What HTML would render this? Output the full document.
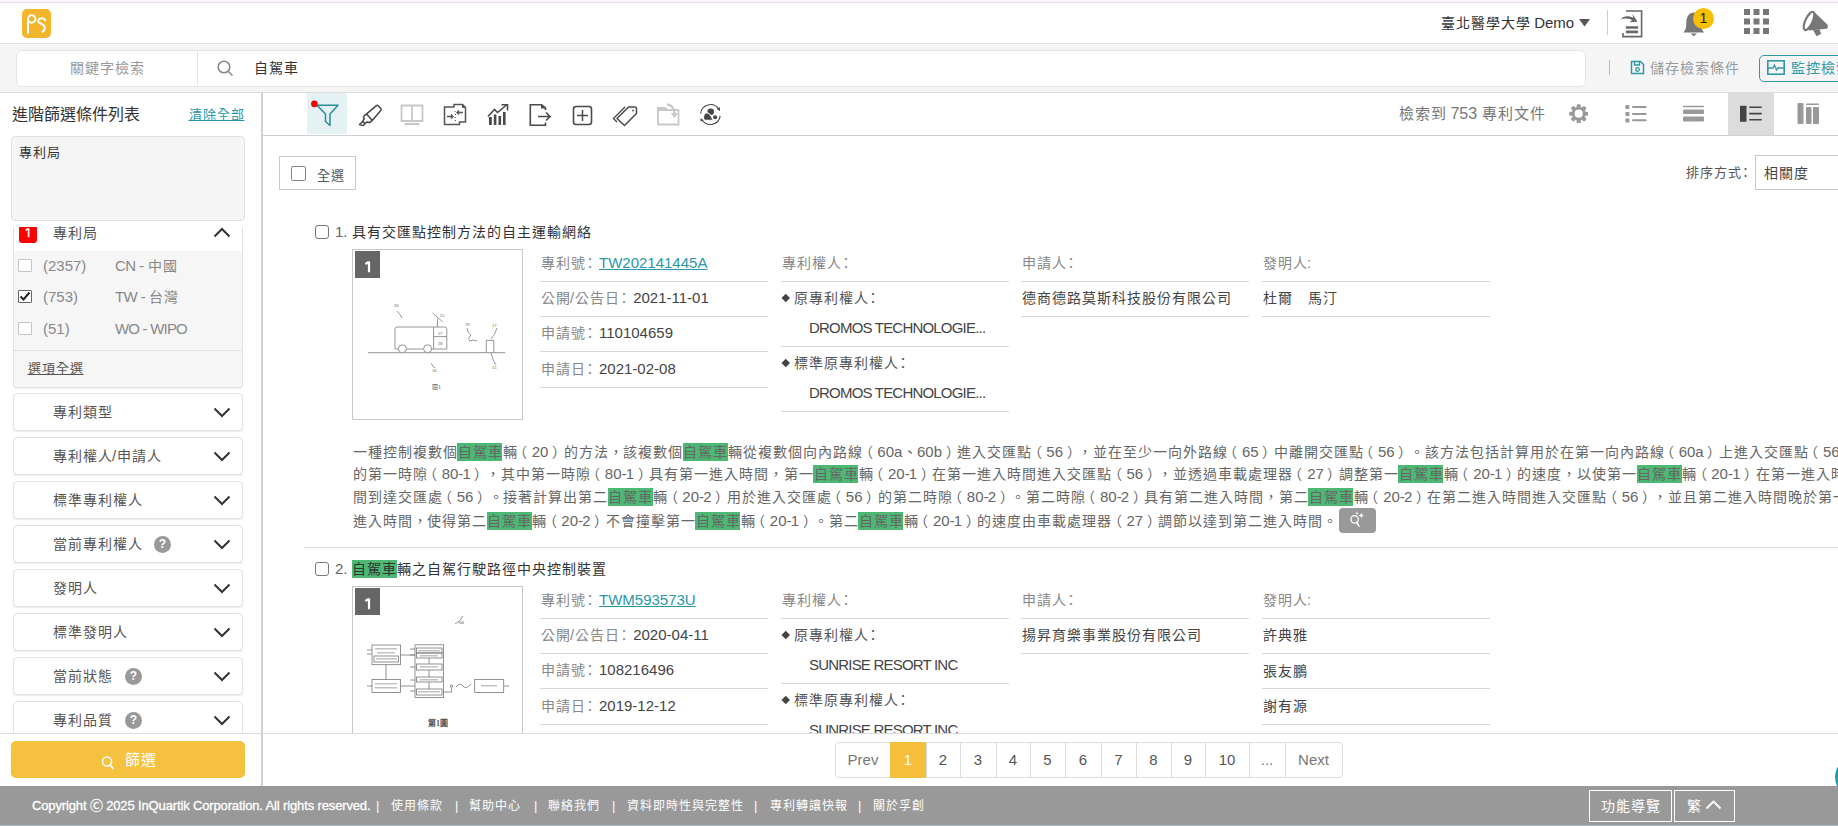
<!DOCTYPE html>
<html lang="zh-TW">
<head>
<meta charset="utf-8">
<style>
*{box-sizing:border-box;margin:0;padding:0}
html,body{width:1838px;height:826px;overflow:hidden;background:#fff}
body{font-family:"Liberation Sans",sans-serif;color:#333;position:relative;text-spacing-trim:space-all}
.a{position:absolute}
.nw{white-space:nowrap}
.k{font-size:calc(1em - 1px);letter-spacing:1px;position:relative;left:.5px}
.p .k{letter-spacing:.65px}
.po .k{left:-4px}
.pc .k{left:3.5px}
.k.cl{letter-spacing:0;left:-2.5px}
.nok .k{font-size:1em;letter-spacing:0;left:0}
svg{display:block}
</style>
</head>
<body>
<!-- top accent line -->
<div class="a" style="left:0;top:0;width:1838px;height:2px;background:#fcf4fd"></div>

<!-- HEADER -->
<div class="a" style="left:0;top:2px;width:1838px;height:42px;background:#fff;border-top:1px solid #e6dfeb;border-bottom:1px solid #e2e2e2"></div>
<!-- logo -->
<div class="a" style="left:22px;top:9px;width:29px;height:29px;background:#f2b52b;border-radius:5px">
  <svg width="29" height="29" viewBox="0 0 29 29"><g fill="none" stroke="#fff" stroke-width="2" stroke-linecap="round"><path d="M6 24V10.5"/><circle cx="9.7" cy="10" r="3.7"/><path d="M23.2 11.6C22.5 9 18 8.2 16.5 10.8C15 13.3 18.8 14.5 21.5 16.2C23.8 17.8 23 21 20.5 23"/></g></svg>
</div>
<div class="a nw" style="left:1440px;top:12.5px;font-size:15px;color:#333;line-height:20px"><span class="k">臺北醫學大學</span> Demo</div>
<svg class="a" style="left:1579px;top:19px" width="11" height="8" viewBox="0 0 11 8"><path d="M0 0H11L5.5 7.5Z" fill="#555"/></svg>
<div class="a" style="left:1607px;top:10px;width:1px;height:25px;background:#ccc"></div>
<!-- doc export icon -->
<svg class="a" style="left:1620px;top:9px" width="24" height="30" viewBox="0 0 24 30"><path d="M6 2H21.6V27.6H3V24" fill="none" stroke="#666" stroke-width="1.6"/><path d="M6 18.5H18M6 22.9H18" stroke="#666" stroke-width="2.6"/><path d="M0.5 10.6C3.5 7 8 6.2 13.2 8.8L12.5 5L17.5 12.8L9.5 13.3L12.2 10.9C8 9.3 4 9.2 0.5 10.6Z" fill="#666"/></svg>
<!-- bell -->
<svg class="a" style="left:1680px;top:8px" width="28" height="30" viewBox="0 0 28 30"><path d="M3.2 24.4C5.5 22.5 6.3 20 6.3 15C6.3 8.5 9.5 4.5 13.8 4.5C18 4.5 21.3 8.5 21.3 15C21.3 20 22 22.5 24.3 24.4Z" fill="#777"/><path d="M10.5 25.5H17L13.8 28.2Z" fill="#777"/></svg>
<div class="a" style="left:1693px;top:7.5px;width:21px;height:21px;border-radius:50%;background:#f7bf00;color:#222;font-size:14px;text-align:center;line-height:21px">1</div>
<!-- apps grid -->
<svg class="a" style="left:1744px;top:9px" width="25" height="25" viewBox="0 0 25 25"><g fill="#777"><rect x="0" y="0" width="6" height="6"/><rect x="9.5" y="0" width="6" height="6"/><rect x="19" y="0" width="6" height="6"/><rect x="0" y="9.5" width="6" height="6"/><rect x="9.5" y="9.5" width="6" height="6"/><rect x="19" y="9.5" width="6" height="6"/><rect x="0" y="19" width="6" height="6"/><rect x="9.5" y="19" width="6" height="6"/><rect x="19" y="19" width="6" height="6"/></g></svg>
<!-- megaphone -->
<svg class="a" style="left:1800px;top:8px" width="30" height="30" viewBox="0 0 30 30"><path d="M13.5 3.3L27 16.2Q29 18.5 26.8 20.7L8.5 22.6Z" fill="#777"/><path d="M13 22L16.6 28.3L21.2 25.8L19.5 21.3Z" fill="#777"/><ellipse cx="9" cy="13" rx="3.6" ry="9.8" transform="rotate(25 9 13)" fill="#fff" stroke="#777" stroke-width="2.2"/></svg>

<!-- SEARCH BAND -->
<div class="a" style="left:0;top:44px;width:1838px;height:49px;background:#f5f5f5;border-bottom:1px solid #dcdcdc"></div>
<div class="a" style="left:16px;top:50px;width:1570px;height:37px;background:#fff;border:1px solid #e4e4e4;border-radius:6px"></div>
<div class="a" style="left:197px;top:51px;width:1px;height:35px;background:#e4e4e4"></div>
<div class="a nw" style="left:16px;top:59px;width:181px;text-align:center;font-size:15px;color:#999;line-height:18px"><span class="k">關鍵字檢索</span></div>
<svg class="a" style="left:216px;top:59px" width="19" height="19" viewBox="0 0 19 19"><circle cx="8" cy="8" r="5.8" fill="none" stroke="#888" stroke-width="1.5"/><path d="M12.2 12.2L16.5 16.5" stroke="#888" stroke-width="1.6"/></svg>
<div class="a nw" style="left:253.5px;top:59px;font-size:15px;color:#333;line-height:18px"><span class="k">自駕車</span></div>
<div class="a" style="left:1609px;top:60px;width:1px;height:15px;background:#bbb"></div>
<svg class="a" style="left:1630px;top:60px" width="15" height="15" viewBox="0 0 15 15"><path d="M1.5 1.5H10.5L13.5 4.5V13.5H1.5Z" fill="none" stroke="#2c9aa8" stroke-width="1.5"/><path d="M4.5 1.5V5H9.5V1.5" fill="none" stroke="#2c9aa8" stroke-width="1.3"/><circle cx="7.5" cy="9.5" r="1.8" fill="none" stroke="#2c9aa8" stroke-width="1.3"/></svg>
<div class="a nw" style="left:1649px;top:59px;font-size:15px;color:#999;line-height:18px"><span class="k">儲存檢索條件</span></div>
<div class="a" style="left:1759px;top:55px;width:100px;height:27px;border:1.5px solid #2c9aa8;border-radius:5px"></div>
<svg class="a" style="left:1767px;top:60px" width="18" height="15" viewBox="0 0 18 15"><rect x="0.8" y="0.8" width="16.4" height="13.4" fill="none" stroke="#2c9aa8" stroke-width="1.6"/><path d="M1 8H6L7.5 5L9.5 10L11 8H17" fill="none" stroke="#2c9aa8" stroke-width="1.3"/></svg>
<div class="a nw" style="left:1790px;top:59px;font-size:15px;color:#2c9aa8;line-height:18px"><span class="k">監控檢索</span></div>

<!-- SIDEBAR -->
<div class="a" style="left:261px;top:93px;width:2px;height:693px;background:#d0d0d0"></div>
<div class="a nw nok" style="left:12px;top:105px;font-size:16px;color:#333;line-height:20px"><span class="k">進階篩選條件列表</span></div>
<div class="a nw" style="left:188px;top:105px;font-size:14px;color:#2a97a8;line-height:18px;text-decoration:underline"><span class="k">清除全部</span></div>
<div class="a" style="left:11px;top:136px;width:234px;height:85px;background:#f5f5f5;border:1px solid #e0e0e0;border-radius:4px"></div>
<div class="a nw" style="left:18px;top:143px;font-size:14px;color:#333;line-height:18px"><span class="k">專利局</span></div>
<!-- expanded panel -->
<div class="a" style="left:13px;top:227px;width:230px;height:161px;background:#f6f6f6;border:1px solid #e2e2e2;border-top:none;border-radius:0 0 4px 4px;box-shadow:0 1px 1px rgba(0,0,0,.06)"></div>
<div class="a" style="left:14px;top:227px;width:228px;height:24px;background:#fff"></div>
<div class="a" style="left:19px;top:227px;width:18px;height:16px;background:#ff0000;border-radius:0 0 3px 3px;overflow:hidden"><svg width="18" height="16" viewBox="0 0 18 16"><path d="M9.6 1.2V10.2 M9.6 1.4L6.6 3.3" fill="none" stroke="#fff" stroke-width="1.7" stroke-linejoin="round"/></svg></div>
<div class="a nw" style="left:52px;top:224px;font-size:15px;color:#555;line-height:18px"><span class="k">專利局</span></div>
<svg class="a" style="left:213px;top:227px" width="18" height="11" viewBox="0 0 18 11"><path d="M1.5 9.5L9 2L16.5 9.5" fill="none" stroke="#333" stroke-width="2"/></svg>
<!-- options -->
<div class="a" style="left:18px;top:259px;width:14px;height:13px;border:1px solid #c4c4c4;border-radius:1px;background:#fff"></div>
<div class="a nw" style="left:43px;top:257px;font-size:15px;color:#888;line-height:18px">(2357)</div>
<div class="a nw" style="left:115px;top:257px;font-size:15px;color:#888;line-height:18px;letter-spacing:-0.6px">CN - <span class="k">中國</span></div>
<div class="a" style="left:18px;top:290px;width:14px;height:13px;border:1px solid #666;border-radius:1px;background:#fff"></div>
<svg class="a" style="left:18px;top:290px" width="14" height="13" viewBox="0 0 14 13"><path d="M2.5 6.5L5.5 9.5L11.5 2.5" fill="none" stroke="#222" stroke-width="2"/></svg>
<div class="a nw" style="left:43px;top:288px;font-size:15px;color:#888;line-height:18px">(753)</div>
<div class="a nw" style="left:115px;top:288px;font-size:15px;color:#888;line-height:18px;letter-spacing:-0.6px">TW - <span class="k">台灣</span></div>
<div class="a" style="left:18px;top:322px;width:14px;height:13px;border:1px solid #c4c4c4;border-radius:1px;background:#fff"></div>
<div class="a nw" style="left:43px;top:320px;font-size:15px;color:#888;line-height:18px">(51)</div>
<div class="a nw" style="left:115px;top:320px;font-size:15px;color:#888;line-height:18px;letter-spacing:-0.8px">WO - WIPO</div>
<div class="a" style="left:14px;top:350px;width:228px;height:0;border-top:1px dotted #d6d6d6"></div>
<div class="a nw" style="left:27px;top:359px;font-size:14px;color:#555;line-height:18px;text-decoration:underline"><span class="k">選項全選</span></div>

<!-- collapsed panels -->
<div class="a" style="left:13px;top:393px;width:230px;height:38px;background:#fff;border:1px solid #e2e2e2;border-radius:4px;box-shadow:0 1px 1px rgba(0,0,0,.08)"></div>
<div class="a nw" style="left:52px;top:403px;font-size:15px;color:#555;line-height:18px"><span class="k">專利類型</span></div>
<svg class="a" style="left:213px;top:407px" width="18" height="11" viewBox="0 0 18 11"><path d="M1.5 1.5L9 9L16.5 1.5" fill="none" stroke="#333" stroke-width="2"/></svg>

<div class="a" style="left:13px;top:437px;width:230px;height:38px;background:#fff;border:1px solid #e2e2e2;border-radius:4px;box-shadow:0 1px 1px rgba(0,0,0,.08)"></div>
<div class="a nw" style="left:52px;top:447px;font-size:15px;color:#555;line-height:18px"><span class="k">專利權人</span>/<span class="k">申請人</span></div>
<svg class="a" style="left:213px;top:451px" width="18" height="11" viewBox="0 0 18 11"><path d="M1.5 1.5L9 9L16.5 1.5" fill="none" stroke="#333" stroke-width="2"/></svg>

<div class="a" style="left:13px;top:481px;width:230px;height:38px;background:#fff;border:1px solid #e2e2e2;border-radius:4px;box-shadow:0 1px 1px rgba(0,0,0,.08)"></div>
<div class="a nw" style="left:52px;top:491px;font-size:15px;color:#555;line-height:18px"><span class="k">標準專利權人</span></div>
<svg class="a" style="left:213px;top:495px" width="18" height="11" viewBox="0 0 18 11"><path d="M1.5 1.5L9 9L16.5 1.5" fill="none" stroke="#333" stroke-width="2"/></svg>

<div class="a" style="left:13px;top:525px;width:230px;height:38px;background:#fff;border:1px solid #e2e2e2;border-radius:4px;box-shadow:0 1px 1px rgba(0,0,0,.08)"></div>
<div class="a nw" style="left:52px;top:535px;font-size:15px;color:#555;line-height:18px"><span class="k">當前專利權人</span></div>
<div class="a" style="left:154px;top:536px;width:17px;height:17px;border-radius:50%;background:#999;color:#fff;font-size:12px;font-weight:bold;text-align:center;line-height:17px">?</div>
<svg class="a" style="left:213px;top:539px" width="18" height="11" viewBox="0 0 18 11"><path d="M1.5 1.5L9 9L16.5 1.5" fill="none" stroke="#333" stroke-width="2"/></svg>

<div class="a" style="left:13px;top:569px;width:230px;height:38px;background:#fff;border:1px solid #e2e2e2;border-radius:4px;box-shadow:0 1px 1px rgba(0,0,0,.08)"></div>
<div class="a nw" style="left:52px;top:579px;font-size:15px;color:#555;line-height:18px"><span class="k">發明人</span></div>
<svg class="a" style="left:213px;top:583px" width="18" height="11" viewBox="0 0 18 11"><path d="M1.5 1.5L9 9L16.5 1.5" fill="none" stroke="#333" stroke-width="2"/></svg>

<div class="a" style="left:13px;top:613px;width:230px;height:38px;background:#fff;border:1px solid #e2e2e2;border-radius:4px;box-shadow:0 1px 1px rgba(0,0,0,.08)"></div>
<div class="a nw" style="left:52px;top:623px;font-size:15px;color:#555;line-height:18px"><span class="k">標準發明人</span></div>
<svg class="a" style="left:213px;top:627px" width="18" height="11" viewBox="0 0 18 11"><path d="M1.5 1.5L9 9L16.5 1.5" fill="none" stroke="#333" stroke-width="2"/></svg>

<div class="a" style="left:13px;top:657px;width:230px;height:38px;background:#fff;border:1px solid #e2e2e2;border-radius:4px;box-shadow:0 1px 1px rgba(0,0,0,.08)"></div>
<div class="a nw" style="left:52px;top:667px;font-size:15px;color:#555;line-height:18px"><span class="k">當前狀態</span></div>
<div class="a" style="left:125px;top:668px;width:17px;height:17px;border-radius:50%;background:#999;color:#fff;font-size:12px;font-weight:bold;text-align:center;line-height:17px">?</div>
<svg class="a" style="left:213px;top:671px" width="18" height="11" viewBox="0 0 18 11"><path d="M1.5 1.5L9 9L16.5 1.5" fill="none" stroke="#333" stroke-width="2"/></svg>

<div class="a" style="left:0;top:701px;width:261px;height:32px;overflow:hidden">
 <div class="a" style="left:13px;top:0;width:230px;height:38px;background:#fff;border:1px solid #e2e2e2;border-radius:4px"></div>
 <div class="a nw" style="left:52px;top:10px;font-size:15px;color:#555;line-height:18px"><span class="k">專利品質</span></div>
 <div class="a" style="left:125px;top:11px;width:17px;height:17px;border-radius:50%;background:#999;color:#fff;font-size:12px;font-weight:bold;text-align:center;line-height:17px">?</div>
 <svg class="a" style="left:213px;top:14px" width="18" height="11" viewBox="0 0 18 11"><path d="M1.5 1.5L9 9L16.5 1.5" fill="none" stroke="#333" stroke-width="2"/></svg>
</div>
<div class="a" style="left:0;top:733px;width:1838px;height:1px;background:#dcdcdc"></div>
<div class="a" style="left:11px;top:741px;width:234px;height:37px;background:#f5c13e;border-radius:5px"></div>
<svg class="a" style="left:101px;top:755px" width="15" height="16" viewBox="0 0 15 16"><circle cx="6" cy="6.5" r="4.5" fill="none" stroke="#fff" stroke-width="1.6"/><path d="M9 10L12.5 14" stroke="#fff" stroke-width="1.8"/></svg>
<div class="a nw" style="left:124px;top:750px;font-size:16px;color:#fff;line-height:20px"><span class="k">篩選</span></div>

<!-- TOOLBAR -->
<div class="a" style="left:263px;top:135px;width:1575px;height:1px;background:#cfcfcf"></div>
<div class="a" style="left:307px;top:93px;width:40px;height:41px;background:#e4f2f4"></div>
<svg class="a" style="left:310px;top:99px" width="32" height="30" viewBox="0 0 32 30"><path d="M7 6.2H28L20 15V26.5L15.5 22.5V15Z" fill="none" stroke="#2a8c9a" stroke-width="1.5" stroke-linejoin="round"/><circle cx="4.4" cy="4.9" r="3.3" fill="#f40000"/></svg>
<!-- highlighter -->
<svg class="a" style="left:352px;top:98px" width="40" height="34" viewBox="0 0 40 34"><g fill="none" stroke="#444" stroke-width="1.5" stroke-linejoin="round"><path d="M11.6 18.4L24.4 7.6Q25.2 7 26.1 7.8L28.8 10.5Q29.6 11.4 28.9 12.3L20.3 22.4"/><path d="M14.8 16.3L20.3 22.4"/><path d="M11.6 18.4Q10.9 19.4 12.3 20.6L10.6 23.7L13 25.4L14.8 24.1L17.6 24.6L20.3 22.4"/><path d="M10.6 23.7L7.5 26.5L11.3 27.6L13 25.4"/></g></svg>
<!-- book/monitor (disabled) -->
<svg class="a" style="left:400px;top:104px" width="24" height="22" viewBox="0 0 24 22"><path d="M1.5 1.5H22.5V17H1.5Z M12 1.5V17" fill="none" stroke="#c8c8c8" stroke-width="1.8"/><rect x="4.5" y="19" width="15" height="2" fill="#c8c8c8"/></svg>
<!-- compare -->
<svg class="a" style="left:443px;top:103px" width="24" height="23" viewBox="0 0 24 23"><path d="M11 4V1.5H19.5L22.5 4.5V19H16.5V21.5H1.5V4H11.5" fill="none" stroke="#555" stroke-width="1.5"/><path d="M19.5 1.5V4.5H22.5" fill="#555" stroke="#555" stroke-width="1"/><path d="M4 13.5H10M8 11.5L10 13.5L8 15.5 M20 9.5H14M16 7.5L14 9.5L16 11.5" fill="none" stroke="#555" stroke-width="1.3"/><path d="M12 8V9 M12.5 11V12 M12 14V15 M12.5 17V18" stroke="#555" stroke-width="1"/></svg>
<!-- chart -->
<svg class="a" style="left:486px;top:104px" width="24" height="22" viewBox="0 0 24 22"><g fill="#4a4a4a"><rect x="3" y="13" width="2.8" height="8"/><rect x="7.8" y="10.5" width="2.6" height="10.5"/><rect x="12.5" y="12" width="2.6" height="9"/><rect x="17" y="8" width="2.6" height="13"/></g><path d="M2 12.5L8.5 5.5L11.5 8.5L20.5 1" fill="none" stroke="#4a4a4a" stroke-width="1.6"/><path d="M15.5 0.8H21.5V6.5" fill="none" stroke="#4a4a4a" stroke-width="1.6"/></svg>
<!-- export -->
<svg class="a" style="left:528px;top:104px" width="24" height="22" viewBox="0 0 24 22"><path d="M17.5 6V4L13.5 0.8H2.3V21.2H17.5V18.5" fill="none" stroke="#4a4a4a" stroke-width="1.6"/><path d="M13 0.8V4.5H17.5" fill="#4a4a4a"/><path d="M10 12.5H22M18 8.5L22 12.5L18 16.5" fill="none" stroke="#4a4a4a" stroke-width="1.6"/></svg>
<!-- plus box -->
<svg class="a" style="left:572px;top:105px" width="21" height="21" viewBox="0 0 21 21"><rect x="1.5" y="1.5" width="18" height="18" rx="2.5" fill="none" stroke="#4a4a4a" stroke-width="1.6"/><path d="M5 10.5H16M10.5 5V16" stroke="#4a4a4a" stroke-width="1.5"/></svg>
<!-- tags -->
<svg class="a" style="left:612px;top:104px" width="27" height="23" viewBox="0 0 27 23"><path d="M5 18L1.5 14.5L13 3" fill="none" stroke="#4a4a4a" stroke-width="1.4"/><path d="M5 14.5L16.5 3H22.5Q24.5 3 24.5 5V9.5L12.5 21.5Z" fill="none" stroke="#4a4a4a" stroke-width="1.5" stroke-linejoin="round"/><circle cx="21" cy="6.5" r="0.9" fill="#4a4a4a"/></svg>
<!-- folder (disabled) -->
<svg class="a" style="left:656px;top:103px" width="25" height="23" viewBox="0 0 25 23"><path d="M2 5H9L11 7H22.5V21.5H2Z" fill="none" stroke="#c8c8c8" stroke-width="1.8" stroke-linejoin="round"/><rect x="2" y="5" width="9" height="3" fill="#c8c8c8"/><path d="M11 1.5Q18 2 18.5 11" fill="none" stroke="#c8c8c8" stroke-width="2.5"/><path d="M14.5 10H22.5L18.5 15Z" fill="#c8c8c8"/></svg>
<!-- sync people -->
<svg class="a" style="left:696px;top:100px" width="30" height="30" viewBox="0 0 30 30"><g fill="none" stroke="#444" stroke-width="1.1"><path d="M4.6 13.6A9.9 9.9 0 0 1 22.6 8.9"/><path d="M24.2 15.9A9.9 9.9 0 0 1 6 19.8"/></g><path d="M20.6 8.9L23.9 7.3L24 11Z M7.6 20.4L4.6 21.6L4.6 17.9Z" fill="#444"/><circle cx="14.7" cy="11.8" r="3.3" fill="#444"/><circle cx="19.1" cy="17.2" r="2" fill="#444"/><path d="M17.3 20.2H9.4Q7.4 20.2 7.5 17.2Q7.8 12.8 11 12.7Q13.8 12.7 17.3 20.2Z" fill="#444" stroke="#fff" stroke-width="1.1"/></svg>

<div class="a nw" style="left:1398px;top:103.5px;font-size:16px;color:#777;line-height:20px"><span class="k">檢索到</span> 753 <span class="k">專利文件</span></div>
<!-- gear -->
<svg class="a" style="left:1568.6px;top:103.8px" width="19.4" height="19.4" viewBox="0 0 19.4 19.4"><g fill="#999"><circle cx="9.7" cy="9.7" r="6.9"/><rect x="7.7" y="0.2" width="4" height="4.2" rx="1.3" transform="rotate(0 9.7 9.7)"/><rect x="7.7" y="0.2" width="4" height="4.2" rx="1.3" transform="rotate(45 9.7 9.7)"/><rect x="7.7" y="0.2" width="4" height="4.2" rx="1.3" transform="rotate(90 9.7 9.7)"/><rect x="7.7" y="0.2" width="4" height="4.2" rx="1.3" transform="rotate(135 9.7 9.7)"/><rect x="7.7" y="0.2" width="4" height="4.2" rx="1.3" transform="rotate(180 9.7 9.7)"/><rect x="7.7" y="0.2" width="4" height="4.2" rx="1.3" transform="rotate(225 9.7 9.7)"/><rect x="7.7" y="0.2" width="4" height="4.2" rx="1.3" transform="rotate(270 9.7 9.7)"/><rect x="7.7" y="0.2" width="4" height="4.2" rx="1.3" transform="rotate(315 9.7 9.7)"/></g><circle cx="9.7" cy="9.7" r="4.1" fill="#fff"/></svg>
<!-- list -->
<svg class="a" style="left:1625px;top:104px" width="22" height="20" viewBox="0 0 22 20"><g fill="#999"><rect x="0.4" y="1" width="4" height="4" rx=".7"/><rect x="0.4" y="8" width="4" height="4" rx=".7"/><rect x="0.4" y="14.5" width="4" height="4" rx=".7"/><rect x="7" y="2.1" width="14.6" height="2" rx="1"/><rect x="7" y="8.9" width="14.6" height="2" rx="1"/><rect x="7" y="15.3" width="14.6" height="2" rx="1"/></g></svg>
<!-- rows -->
<svg class="a" style="left:1683px;top:105px" width="22" height="18" viewBox="0 0 22 18"><g fill="#999"><rect x="0" y="0.8" width="21" height="1.5" rx=".7"/><rect x="0" y="4.5" width="21" height="4.5" rx="1"/><rect x="0" y="11.5" width="21" height="5" rx="1"/></g></svg>
<div class="a" style="left:1728px;top:93px;width:46px;height:42px;background:#dcdcdc"></div>
<svg class="a" style="left:1740px;top:105px" width="23" height="18" viewBox="0 0 23 18"><g fill="#444"><rect x="0" y="0.8" width="6.5" height="16" rx=".5"/><rect x="9" y="1.5" width="13" height="1.6" rx=".8"/><rect x="9" y="7.8" width="13" height="1.6" rx=".8"/><rect x="9" y="14" width="13" height="1.6" rx=".8"/></g></svg>
<svg class="a" style="left:1797px;top:102px" width="23" height="23" viewBox="0 0 23 23"><g fill="#999"><rect x="0.5" y="1" width="6" height="21" rx="1"/><rect x="9" y="1.5" width="13" height="1.6" rx=".8"/><rect x="9" y="5" width="5.5" height="17" rx="1"/><rect x="16" y="5" width="6" height="17" rx="1"/></g></svg>

<!-- LIST HEADER -->
<div class="a" style="left:279px;top:156px;width:77px;height:34px;border:1px solid #c8c8c8"></div>
<div class="a" style="left:291px;top:166px;width:15px;height:15px;border:1px solid #888;border-radius:2px"></div>
<div class="a nw" style="left:316px;top:166px;font-size:14px;color:#555;line-height:18px"><span class="k">全選</span></div>
<div class="a nw" style="left:1685px;top:163px;font-size:14px;color:#555;line-height:18px"><span class="k">排序方式</span><span class="k cl">：</span></div>
<div class="a" style="left:1755px;top:155px;width:100px;height:35px;border:1px solid #c8c8c8"></div>
<div class="a nw" style="left:1763px;top:164px;font-size:15px;color:#444;line-height:18px"><span class="k">相關度</span></div>

<!-- RESULTS (clipped) -->
<div class="a" style="left:263px;top:136px;width:1575px;height:597px;overflow:hidden">
<div class="a" style="left:-263px;top:-136px;width:1838px;height:826px">
<style>
.cb{position:absolute;width:14px;height:14px;border:1px solid #777;border-radius:3px;background:#fff}
.ttl{position:absolute;white-space:nowrap;font-size:15px;color:#333;line-height:20px}
.img{position:absolute;width:171px;height:171px;border:1px solid #c8c8c8;background:#fff;overflow:hidden}
.bdg{position:absolute;left:2px;top:1px;width:25px;height:27px;background:#666;color:#fff;font-size:14px;-webkit-text-stroke:.5px #fff;text-align:center;line-height:28px}
.lb{position:absolute;white-space:nowrap;font-size:15px;color:#888;line-height:20px}
.vl{color:#444}
.hl{position:absolute;height:1px;background:#d6d6d6}
.lk{color:#2a97a8;text-decoration:underline}
.dm{display:inline-block;width:5.5px;height:5.5px;background:#444;transform:rotate(45deg);margin:0 5px 3px 1.5px;vertical-align:middle}
.lt{letter-spacing:-0.8px}
.p{letter-spacing:-0.35px}
.hy{letter-spacing:-0.85px}
.ab{position:absolute;left:352px;white-space:nowrap;font-size:15px;color:#666;line-height:20px}
.g{background:#4cb873;padding-bottom:1px}
</style>
<!-- result 1 -->
<div class="cb" style="left:315px;top:225px"></div>
<div class="ttl" style="left:335px;top:222px"><span style="color:#666">1.</span> <span class="k">具有交匯點控制方法的自主運輸網絡</span></div>
<div class="img" style="left:352px;top:249px">
 <div class="bdg"><svg width="25" height="27" viewBox="0 0 25 27"><path d="M14 10.5V21.3 M14 10.8L10.4 13" fill="none" stroke="#fff" stroke-width="2.2" stroke-linejoin="round"/></svg></div>
 <svg class="a" style="left:0;top:0" width="171" height="171" viewBox="352 249 171 171">
  <g fill="none" stroke="#8a8a8a" stroke-width="0.9">
   <path d="M367 351.7H504.3"/>
   <path d="M394 348V328Q394 326 396 326H443.8Q445.8 326 445.8 328V348H394"/>
   <path d="M432.6 326V348M432.6 335.6H446"/>
   <circle cx="401.4" cy="347.8" r="4" fill="#fff"/><circle cx="426.6" cy="347.8" r="4" fill="#fff"/>
   <path d="M436.5 326V317.6M431.4 311.9L441.6 320.7"/>
   <path d="M485.3 351.7V339.4H492.8V351.7"/>
   <path d="M396 310Q399 313 401 317M466 327Q466 332 470 334Q466 338 469 340Q472 338 476 340M496 327Q494 334 490 338M490 352Q492 360 495 364M430 362Q432 366 434 367"/>
  </g>
  <g fill="#555" font-size="4.5" font-family="Liberation Serif,serif"><text x="393" y="306">20</text><text x="439" y="316">25</text><text x="437" y="334">27</text><text x="437" y="344">28</text><text x="464" y="325">19</text><text x="491" y="326">17</text><text x="491" y="368">15</text><text x="431" y="371">10</text><text x="431" y="388" font-size="6">圖1</text></g>
 </svg>
</div>
<div class="lb" style="left:540px;top:253px"><span class="k">專利號</span><span class="k cl">：</span><span class="lk">TW202141445A</span></div>
<div class="hl" style="left:540px;top:281px;width:228px"></div>
<div class="lb" style="left:540px;top:288px"><span class="k">公開</span>/<span class="k">公告日</span><span class="k cl">：</span><span class="vl">2021-11-01</span></div>
<div class="hl" style="left:540px;top:316px;width:228px"></div>
<div class="lb" style="left:540px;top:323px"><span class="k">申請號</span><span class="k cl">：</span><span class="vl">110104659</span></div>
<div class="hl" style="left:540px;top:351px;width:228px"></div>
<div class="lb" style="left:540px;top:359px"><span class="k">申請日</span><span class="k cl">：</span><span class="vl">2021-02-08</span></div>
<div class="hl" style="left:540px;top:387px;width:228px"></div>

<div class="lb" style="left:781px;top:253px"><span class="k">專利權人</span><span class="k cl">：</span></div>
<div class="hl" style="left:781px;top:281px;width:228px"></div>
<div class="lb" style="left:781px;top:288px;color:#555"><span class="dm"></span><span class="k">原專利權人</span><span class="k cl">：</span></div>
<div class="lb vl" style="left:809px;top:318px"><span class="lt">DROMOS TECHNOLOGIE...</span></div>
<div class="hl" style="left:781px;top:346px;width:228px"></div>
<div class="lb" style="left:781px;top:353px;color:#555"><span class="dm"></span><span class="k">標準原專利權人</span><span class="k cl">：</span></div>
<div class="lb vl" style="left:809px;top:383px"><span class="lt">DROMOS TECHNOLOGIE...</span></div>
<div class="hl" style="left:781px;top:411px;width:228px"></div>

<div class="lb" style="left:1021px;top:253px"><span class="k">申請人</span><span class="k cl">：</span></div>
<div class="hl" style="left:1021px;top:281px;width:228px"></div>
<div class="lb vl" style="left:1021px;top:288px"><span class="k">德商德路莫斯科技股份有限公司</span></div>
<div class="hl" style="left:1021px;top:316px;width:228px"></div>

<div class="lb" style="left:1262px;top:253px"><span class="k">發明人</span>:</div>
<div class="hl" style="left:1262px;top:281px;width:228px"></div>
<div class="lb vl" style="left:1262px;top:288px"><span class="k">杜爾　馬汀</span></div>
<div class="hl" style="left:1262px;top:316px;width:228px"></div>

<div class="ab" style="top:442px"><span class="k">一種控制複數個</span><span class="g"><span class="k">自駕車</span></span><span class="k">輛</span><span class="p po"><span class="k">（</span></span>20<span class="p pc"><span class="k">）</span></span><span class="k">的方法</span><span class="p"><span class="k">，</span></span><span class="k">該複數個</span><span class="g"><span class="k">自駕車</span></span><span class="k">輛從複數個向內路線</span><span class="p po"><span class="k">（</span></span>60a<span class="p"><span class="k">、</span></span>60b<span class="p pc"><span class="k">）</span></span><span class="k">進入交匯點</span><span class="p po"><span class="k">（</span></span>56<span class="p pc"><span class="k">）</span></span><span class="p"><span class="k">，</span></span><span class="k">並在至少一向外路線</span><span class="p po"><span class="k">（</span></span>65<span class="p pc"><span class="k">）</span></span><span class="k">中離開交匯點</span><span class="p po"><span class="k">（</span></span>56<span class="p pc"><span class="k">）</span></span><span class="p"><span class="k">。</span></span><span class="k">該方法包括計算用於在第一向內路線</span><span class="p po"><span class="k">（</span></span>60a<span class="p pc"><span class="k">）</span></span><span class="k">上進入交匯點</span><span class="p po"><span class="k">（</span></span>56<span class="p pc"><span class="k">）</span></span></div>
<div class="ab" style="top:464px"><span class="k">的第一時隙</span><span class="p po"><span class="k">（</span></span>80<span class="hy">-</span>1<span class="p pc"><span class="k">）</span></span><span class="p"><span class="k">，</span></span><span class="k">其中第一時隙</span><span class="p po"><span class="k">（</span></span>80<span class="hy">-</span>1<span class="p pc"><span class="k">）</span></span><span class="k">具有第一進入時間</span><span class="p"><span class="k">，</span></span><span class="k">第一</span><span class="g"><span class="k">自駕車</span></span><span class="k">輛</span><span class="p po"><span class="k">（</span></span>20<span class="hy">-</span>1<span class="p pc"><span class="k">）</span></span><span class="k">在第一進入時間進入交匯點</span><span class="p po"><span class="k">（</span></span>56<span class="p pc"><span class="k">）</span></span><span class="p"><span class="k">，</span></span><span class="k">並透過車載處理器</span><span class="p po"><span class="k">（</span></span>27<span class="p pc"><span class="k">）</span></span><span class="k">調整第一</span><span class="g"><span class="k">自駕車</span></span><span class="k">輛</span><span class="p po"><span class="k">（</span></span>20<span class="hy">-</span>1<span class="p pc"><span class="k">）</span></span><span class="k">的速度</span><span class="p"><span class="k">，</span></span><span class="k">以使第一</span><span class="g"><span class="k">自駕車</span></span><span class="k">輛</span><span class="p po"><span class="k">（</span></span>20<span class="hy">-</span>1<span class="p pc"><span class="k">）</span></span><span class="k">在第一進入時</span></div>
<div class="ab" style="top:487px"><span class="k">間到達交匯處</span><span class="p po"><span class="k">（</span></span>56<span class="p pc"><span class="k">）</span></span><span class="p"><span class="k">。</span></span><span class="k">接著計算出第二</span><span class="g"><span class="k">自駕車</span></span><span class="k">輛</span><span class="p po"><span class="k">（</span></span>20<span class="hy">-</span>2<span class="p pc"><span class="k">）</span></span><span class="k">用於進入交匯處</span><span class="p po"><span class="k">（</span></span>56<span class="p pc"><span class="k">）</span></span><span class="k">的第二時隙</span><span class="p po"><span class="k">（</span></span>80<span class="hy">-</span>2<span class="p pc"><span class="k">）</span></span><span class="p"><span class="k">。</span></span><span class="k">第二時隙</span><span class="p po"><span class="k">（</span></span>80<span class="hy">-</span>2<span class="p pc"><span class="k">）</span></span><span class="k">具有第二進入時間</span><span class="p"><span class="k">，</span></span><span class="k">第二</span><span class="g"><span class="k">自駕車</span></span><span class="k">輛</span><span class="p po"><span class="k">（</span></span>20<span class="hy">-</span>2<span class="p pc"><span class="k">）</span></span><span class="k">在第二進入時間進入交匯點</span><span class="p po"><span class="k">（</span></span>56<span class="p pc"><span class="k">）</span></span><span class="p"><span class="k">，</span></span><span class="k">並且第二進入時間晚於第一</span></div>
<div class="ab" style="top:511px"><span class="k">進入時間</span><span class="p"><span class="k">，</span></span><span class="k">使得第二</span><span class="g"><span class="k">自駕車</span></span><span class="k">輛</span><span class="p po"><span class="k">（</span></span>20<span class="hy">-</span>2<span class="p pc"><span class="k">）</span></span><span class="k">不會撞擊第一</span><span class="g"><span class="k">自駕車</span></span><span class="k">輛</span><span class="p po"><span class="k">（</span></span>20<span class="hy">-</span>1<span class="p pc"><span class="k">）</span></span><span class="p"><span class="k">。</span></span><span class="k">第二</span><span class="g"><span class="k">自駕車</span></span><span class="k">輛</span><span class="p po"><span class="k">（</span></span>20<span class="hy">-</span>1<span class="p pc"><span class="k">）</span></span><span class="k">的速度由車載處理器</span><span class="p po"><span class="k">（</span></span>27<span class="p pc"><span class="k">）</span></span><span class="k">調節以達到第二進入時間</span><span class="p"><span class="k">。</span></span></div>
<div class="a" style="left:1339px;top:508px;width:37px;height:25px;background:#999;border-radius:4px"></div>
<svg class="a" style="left:1346px;top:509px" width="22" height="22" viewBox="1346 509 22 22"><circle cx="1354.6" cy="519.4" r="3.7" fill="none" stroke="#fff" stroke-width="1.3"/><path d="M1356.8 522.4L1359 526.2" stroke="#fff" stroke-width="1.5" stroke-linecap="round"/><path d="M1361.3 512.7Q1361.6 515.2 1364.1 515.5Q1361.6 515.8 1361.3 518.3Q1361 515.8 1358.5 515.5Q1361 515.2 1361.3 512.7Z" fill="#fff"/><path d="M1357 511.6Q1357.2 513.1 1358.7 513.3Q1357.2 513.5 1357 515Q1356.8 513.5 1355.3 513.3Q1356.8 513.1 1357 511.6Z" fill="#fff"/></svg>

<div class="hl" style="left:304px;top:547px;width:1534px;background:#dedede"></div>

<!-- result 2 -->
<div class="cb" style="left:315px;top:562px"></div>
<div class="ttl" style="left:335px;top:559px"><span style="color:#666">2.</span> <span class="g"><span class="k">自駕車</span></span><span class="k">輛之自駕行駛路徑中央控制裝置</span></div>
<div class="img" style="left:352px;top:586px">
 <div class="bdg"><svg width="25" height="27" viewBox="0 0 25 27"><path d="M14 10.5V21.3 M14 10.8L10.4 13" fill="none" stroke="#fff" stroke-width="2.2" stroke-linejoin="round"/></svg></div>
 <svg class="a" style="left:0;top:0" width="171" height="171" viewBox="352 586 171 171">
  <g fill="none" stroke="#777" stroke-width="0.8">
   <rect x="371" y="644" width="28.5" height="19.7"/><rect x="373" y="655" width="24.5" height="6"/>
   <rect x="371" y="678.4" width="28.5" height="13"/>
   <path d="M385 663.7V678.4M399.5 654H414M399.5 685H414"/>
   <rect x="414" y="643.8" width="28.6" height="52.6"/>
   <rect x="415.5" y="647" width="25.5" height="5"/><rect x="415.5" y="652" width="25.5" height="5"/><rect x="415.5" y="663" width="25.5" height="6"/><rect x="415.5" y="676" width="25.5" height="5"/><rect x="415.5" y="688" width="25.5" height="6"/>
   <path d="M428 657V663M428 669V676M428 681V688"/>
   <path d="M442.6 691H450.5V686"/><circle cx="450.5" cy="685" r="1.2"/>
   <path d="M455 686Q459 681 462 685Q465 689 470 683"/>
   <rect x="473.7" y="678.4" width="29" height="13"/>
   <path d="M503 685H508M366 649H371M366 653H371M366 685H371M409 648H414M409 654H414M409 666H414M409 679H414M409 690H414"/>
   <path d="M462 615Q460 620 454 623"/>
  </g>
  <g fill="#c2c2c2"><rect x="374" y="647" width="22" height="1.5"/><rect x="376" y="651" width="18" height="1.5"/><rect x="375" y="657" width="21" height="1.5"/><rect x="374" y="682" width="22" height="1.5"/><rect x="374" y="686" width="22" height="1.5"/><rect x="417" y="649" width="22" height="1.5"/><rect x="419" y="654" width="18" height="1.5"/><rect x="419" y="665" width="18" height="1.5"/><rect x="419" y="678" width="18" height="1.5"/><rect x="417" y="690" width="22" height="1.5"/><rect x="480" y="684" width="16" height="1.5"/></g>
  <g fill="#555" font-family="Liberation Serif,serif"><text x="427" y="725" font-size="8" font-weight="bold">第1圖</text><text x="457" y="623" font-size="4">100</text></g>
 </svg>
</div>
<div class="lb" style="left:540px;top:590px"><span class="k">專利號</span><span class="k cl">：</span><span class="lk">TWM593573U</span></div>
<div class="hl" style="left:540px;top:618px;width:228px"></div>
<div class="lb" style="left:540px;top:625px"><span class="k">公開</span>/<span class="k">公告日</span><span class="k cl">：</span><span class="vl">2020-04-11</span></div>
<div class="hl" style="left:540px;top:653px;width:228px"></div>
<div class="lb" style="left:540px;top:660px"><span class="k">申請號</span><span class="k cl">：</span><span class="vl">108216496</span></div>
<div class="hl" style="left:540px;top:688px;width:228px"></div>
<div class="lb" style="left:540px;top:696px"><span class="k">申請日</span><span class="k cl">：</span><span class="vl">2019-12-12</span></div>
<div class="hl" style="left:540px;top:724px;width:228px"></div>

<div class="lb" style="left:781px;top:590px"><span class="k">專利權人</span><span class="k cl">：</span></div>
<div class="hl" style="left:781px;top:618px;width:228px"></div>
<div class="lb" style="left:781px;top:625px;color:#555"><span class="dm"></span><span class="k">原專利權人</span><span class="k cl">：</span></div>
<div class="lb vl" style="left:809px;top:655px"><span class="lt">SUNRISE RESORT INC</span></div>
<div class="hl" style="left:781px;top:683px;width:228px"></div>
<div class="lb" style="left:781px;top:690px;color:#555"><span class="dm"></span><span class="k">標準原專利權人</span><span class="k cl">：</span></div>
<div class="lb vl" style="left:809px;top:720px"><span class="lt">SUNRISE RESORT INC</span></div>

<div class="lb" style="left:1021px;top:590px"><span class="k">申請人</span><span class="k cl">：</span></div>
<div class="hl" style="left:1021px;top:618px;width:228px"></div>
<div class="lb vl" style="left:1021px;top:625px"><span class="k">揚昇育樂事業股份有限公司</span></div>
<div class="hl" style="left:1021px;top:653px;width:228px"></div>

<div class="lb" style="left:1262px;top:590px"><span class="k">發明人</span>:</div>
<div class="hl" style="left:1262px;top:618px;width:228px"></div>
<div class="lb vl" style="left:1262px;top:625px"><span class="k">許典雅</span></div>
<div class="hl" style="left:1262px;top:653px;width:228px"></div>
<div class="lb vl" style="left:1262px;top:661px"><span class="k">張友鵬</span></div>
<div class="hl" style="left:1262px;top:688px;width:228px"></div>
<div class="lb vl" style="left:1262px;top:696px"><span class="k">謝有源</span></div>
<div class="hl" style="left:1262px;top:724px;width:228px"></div>
</div>
</div>
<!-- PAGINATION -->
<div class="a" style="left:835px;top:742px;width:508px;height:36px;border:1px solid #dcdcdc;border-radius:4px;background:#fff"></div>
<div class="a nw" style="left:836px;top:750px;width:54px;text-align:center;font-size:15px;color:#777;line-height:20px">Prev</div>
<div class="a" style="left:890px;top:742px;width:36px;height:36px;background:#f5be3b"></div>
<div class="a nw" style="left:890px;top:750px;width:36px;text-align:center;font-size:15px;color:#fff;line-height:20px">1</div>
<div class="a" style="left:926px;top:743px;width:1px;height:34px;background:#dcdcdc"></div>
<div class="a nw" style="left:926px;top:750px;width:34px;text-align:center;font-size:15px;color:#555;line-height:20px">2</div>
<div class="a" style="left:960px;top:743px;width:1px;height:34px;background:#dcdcdc"></div>
<div class="a nw" style="left:960px;top:750px;width:36px;text-align:center;font-size:15px;color:#555;line-height:20px">3</div>
<div class="a" style="left:996px;top:743px;width:1px;height:34px;background:#dcdcdc"></div>
<div class="a nw" style="left:996px;top:750px;width:34px;text-align:center;font-size:15px;color:#555;line-height:20px">4</div>
<div class="a" style="left:1030px;top:743px;width:1px;height:34px;background:#dcdcdc"></div>
<div class="a nw" style="left:1030px;top:750px;width:35px;text-align:center;font-size:15px;color:#555;line-height:20px">5</div>
<div class="a" style="left:1065px;top:743px;width:1px;height:34px;background:#dcdcdc"></div>
<div class="a nw" style="left:1065px;top:750px;width:36px;text-align:center;font-size:15px;color:#555;line-height:20px">6</div>
<div class="a" style="left:1101px;top:743px;width:1px;height:34px;background:#dcdcdc"></div>
<div class="a nw" style="left:1101px;top:750px;width:35px;text-align:center;font-size:15px;color:#555;line-height:20px">7</div>
<div class="a" style="left:1136px;top:743px;width:1px;height:34px;background:#dcdcdc"></div>
<div class="a nw" style="left:1136px;top:750px;width:35px;text-align:center;font-size:15px;color:#555;line-height:20px">8</div>
<div class="a" style="left:1171px;top:743px;width:1px;height:34px;background:#dcdcdc"></div>
<div class="a nw" style="left:1171px;top:750px;width:34px;text-align:center;font-size:15px;color:#555;line-height:20px">9</div>
<div class="a" style="left:1205px;top:743px;width:1px;height:34px;background:#dcdcdc"></div>
<div class="a nw" style="left:1205px;top:750px;width:44px;text-align:center;font-size:15px;color:#555;line-height:20px">10</div>
<div class="a" style="left:1249px;top:743px;width:1px;height:34px;background:#dcdcdc"></div>
<div class="a nw" style="left:1249px;top:750px;width:36px;text-align:center;font-size:15px;color:#777;line-height:20px">...</div>
<div class="a" style="left:1285px;top:743px;width:1px;height:34px;background:#dcdcdc"></div>
<div class="a nw" style="left:1285px;top:750px;width:57px;text-align:center;font-size:15px;color:#777;line-height:20px">Next</div>
<!-- FOOTER -->
<div class="a" style="left:0;top:786px;width:1838px;height:40px;background:#999"></div>
<div class="a" style="left:0;top:825px;width:1838px;height:1px;background:#a9bcbf"></div>
<div class="a nw" style="left:32px;top:797px;font-size:13px;color:#fff;line-height:18px;letter-spacing:-0.14px;-webkit-text-stroke:0.3px #fff">Copyright &#9400; 2025 InQuartik Corporation. All rights reserved.</div>
<div class="a nw" style="left:376px;top:797px;font-size:13px;color:#fff;line-height:18px">|</div>
<div class="a nw" style="left:390px;top:797px;font-size:13px;color:#fff;line-height:18px"><span class="k">使用條款</span></div>
<div class="a nw" style="left:455px;top:797px;font-size:13px;color:#fff;line-height:18px">|</div>
<div class="a nw" style="left:468px;top:797px;font-size:13px;color:#fff;line-height:18px"><span class="k">幫助中心</span></div>
<div class="a nw" style="left:534px;top:797px;font-size:13px;color:#fff;line-height:18px">|</div>
<div class="a nw" style="left:547px;top:797px;font-size:13px;color:#fff;line-height:18px"><span class="k">聯絡我們</span></div>
<div class="a nw" style="left:612px;top:797px;font-size:13px;color:#fff;line-height:18px">|</div>
<div class="a nw" style="left:626px;top:797px;font-size:13px;color:#fff;line-height:18px"><span class="k">資料即時性與完整性</span></div>
<div class="a nw" style="left:754px;top:797px;font-size:13px;color:#fff;line-height:18px">|</div>
<div class="a nw" style="left:769px;top:797px;font-size:13px;color:#fff;line-height:18px"><span class="k">專利轉讓快報</span></div>
<div class="a nw" style="left:858px;top:797px;font-size:13px;color:#fff;line-height:18px">|</div>
<div class="a nw" style="left:872px;top:797px;font-size:13px;color:#fff;line-height:18px"><span class="k">關於孚創</span></div>
<div class="a" style="left:1589px;top:790px;width:83px;height:32px;border:1.5px solid #fff"></div>
<div class="a nw" style="left:1589px;top:796px;width:83px;text-align:center;font-size:15px;color:#fff;line-height:20px"><span class="k">功能導覽</span></div>
<div class="a" style="left:1674px;top:790px;width:61px;height:32px;border:1.5px solid #fff"></div>
<div class="a nw" style="left:1686px;top:796px;font-size:15px;color:#fff;line-height:20px"><span class="k">繁</span></div>
<svg class="a" style="left:1705px;top:799px" width="17" height="11" viewBox="0 0 17 11"><path d="M1.5 9.5L8.5 2.5L15.5 9.5" fill="none" stroke="#fff" stroke-width="1.8"/></svg>
<div class="a" style="left:1834.6px;top:757.3px;width:40px;height:40px;border-radius:50%;background:#19a0b0"></div>
</body>
</html>
